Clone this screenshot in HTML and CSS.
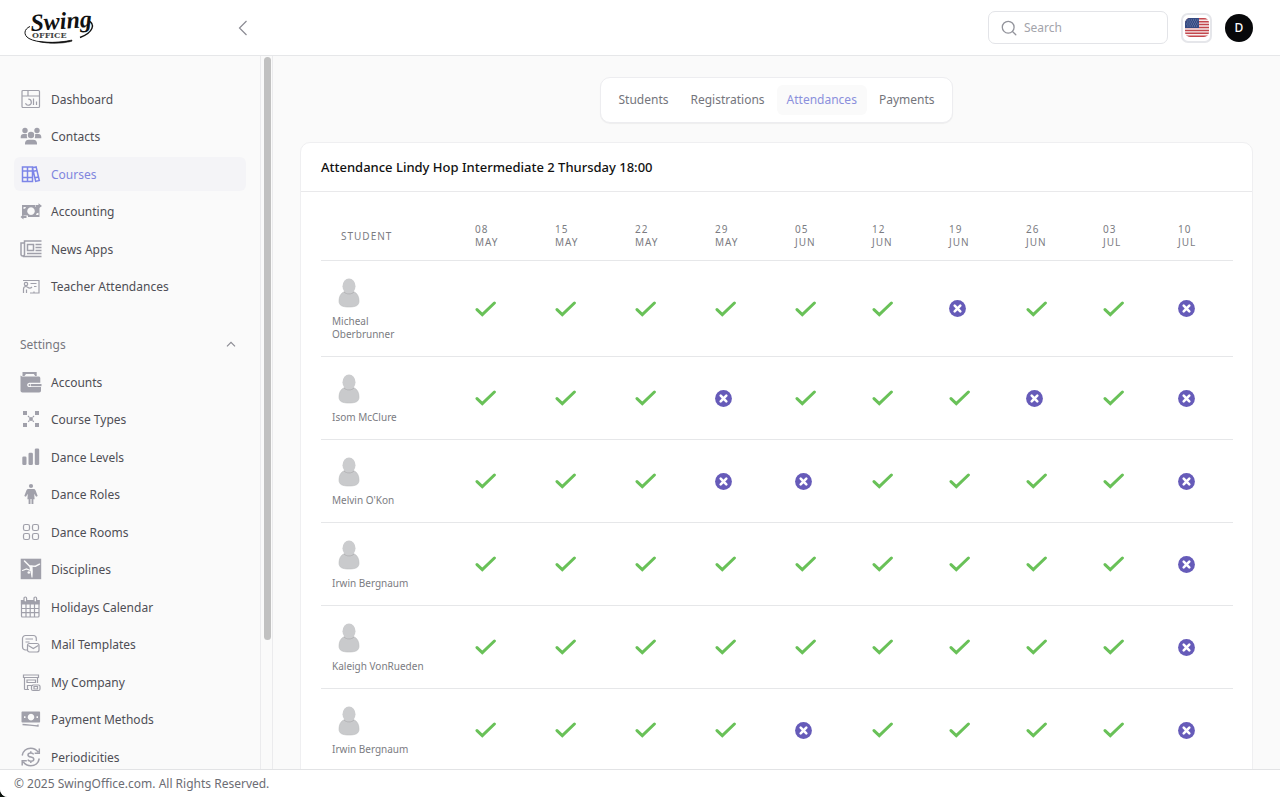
FILE: index.html
```html
<!DOCTYPE html>
<html lang="en">
<head>
    <meta charset="UTF-8">
    <meta name="viewport" content="width=device-width, initial-scale=1.0">
    <title>Attendances - SwingOffice</title>
    <link rel="stylesheet" href="styles.css">
</head>
<body>
    <!-- Shared symbols -->
    <svg class="symbols" aria-hidden="true">
        <symbol id="check" viewBox="0 0 22 16">
            <path d="M2 8.6 7.3 13.6 19.4 2" fill="none" stroke="#69c158" stroke-width="3" stroke-linecap="round"/>
        </symbol>
        <symbol id="cross" viewBox="0 0 17 17">
            <circle cx="8.5" cy="8.5" r="8.4" fill="#665bb9"/>
            <path d="M5.7 5.7 11.3 11.3M11.3 5.7 5.7 11.3" fill="none" stroke="#fff" stroke-width="2.6" stroke-linecap="round"/>
        </symbol>
        <symbol id="person" viewBox="0 0 22 30">
            <path d="M6.5 13.5C2.8 15 1 18.500 1 23c0 4.500 3.200 6 10 6s10-1.500 10-6c0-4.500-1.800-8-5.500-9.500z" fill="#c9cacc" stroke="#bcbdbf" stroke-width=".6"/>
            <ellipse cx="11" cy="8.300" rx="6.500" ry="7.700" fill="#cbccce"/>
            <path d="M6 14c2.500 2.600 7.500 2.600 10 0" fill="none" stroke="#aeafb1" stroke-width=".8"/>
        </symbol>
    </svg>

    <div class="page">
        <header class="header">
            <div class="brand">
                <a href="#" class="logo" aria-label="Swing Office">
                    <svg width="72" height="38" viewBox="0 0 72 38">
                        <path d="M7 17.500C1 20 0 26 6 29.500c8 4.500 26 5 41 2.500" fill="none" stroke="#111" stroke-width="1"/>
                        <path d="M16 32.500c11 1.500 22 1 33-1.500l-.3 1.300C38 34.800 26 35 16 32.500z" fill="#111" stroke="#111" stroke-width=".6"/>
                        <path d="M65 11.500c8 3.500 5 12-8 17" fill="none" stroke="#111" stroke-width="1.400"/>
                        <text class="logo-script" x="8" y="22" transform="rotate(-4 8 22)">Swing</text>
                        <text class="logo-office" x="9" y="29">OFFICE</text>
                    </svg>
                </a>
                <button type="button" class="collapse" aria-label="Collapse menu">
                    <svg width="10" height="16" viewBox="0 0 10 16"><path d="M8.500 1 1.500 8l7 7" fill="none" stroke="#8b8b93" stroke-width="1.200"/></svg>
                </button>
            </div>
            <div class="tools">
                <label class="search">
                    <svg width="16" height="16" viewBox="0 0 16 16" fill="none" stroke="#92939b" stroke-width="1.300" stroke-linecap="round"><circle cx="7.200" cy="7.200" r="5.900"/><path d="m11.500 11.500 3.300 3.300"/></svg>
                    <input type="search" placeholder="Search" aria-label="Search">
                </label>
                <button type="button" class="language" aria-label="Language: English">
                    <svg width="24" height="19" viewBox="0 0 24 19">
                        <clipPath id="flag"><rect width="24" height="19" rx="5"/></clipPath>
                        <g clip-path="url(#flag)">
                            <path fill="#f6eeee" d="M0 0h24v19H0z"/>
                            <path d="M0 .75h24M0 3.670h24M0 6.590h24M0 9.510h24M0 12.430h24M0 15.350h24M0 18.270h24" stroke="#c4474d" stroke-width="1.460"/>
                            <path fill="#344a82" d="M0 0h14v10H0z"/>
                            <path d="M1.500 2h12M2.500 4h11M1.500 6h12M2.500 8h11" stroke="#a9b3cf" stroke-width=".8" stroke-dasharray=".8 1.400"/>
                        </g>
                    </svg>
                </button>
                <button type="button" class="profile">D</button>
            </div>
        </header>

        <div class="middle">
            <nav class="sidebar">
                <ul class="nav-list">
                    <li><a href="#" class="nav-link">
                        <svg class="icon line" viewBox="0 0 22 22"><rect x="2" y="2.500" width="17.500" height="17" rx="1"/><path d="M2 8h17.500M8 2.500V8M8.300 11.200a3 3 0 1 1-2.800 4M13.500 10.500V17M16.500 13.500V17"/></svg>
                        Dashboard</a></li>
                    <li><a href="#" class="nav-link">
                        <svg class="icon" viewBox="0 0 22 22"><circle cx="5" cy="5.500" r="2.700"/><circle cx="17" cy="5.500" r="2.700"/><circle cx="11" cy="10" r="3.200"/><path d="M.7 13.300V12c0-1.700 1.100-2.900 2.800-2.900h2.400c.7 0 1 .1 1 .5-.2 1.300 0 2.500.4 3.700zM21.300 13.300V12c0-1.700-1.100-2.900-2.800-2.900h-2.400c-.7 0-1 .1-1 .5.200 1.300 0 2.500-.4 3.700zM5 19.500v-1.200c0-2 1.400-3.600 3.600-3.600h4.800c2.200 0 3.600 1.600 3.600 3.600v1.200z"/></svg>
                        Contacts</a></li>
                    <li><a href="#" class="nav-link active" aria-current="page">
                        <svg class="icon line thick" viewBox="0 0 22 22"><path d="M2.500 4h5v14.500h-5zM7.500 4h5v14.500h-5zM2.500 8h10M2.500 14.500h10M12.500 4.800l3.600-.9 3.200 13.600-3.600.9zM13.500 8.200l3.600-.8M15 14.800l3.600-.9"/></svg>
                        Courses</a></li>
                    <li><a href="#" class="nav-link">
                        <svg class="icon" viewBox="0 0 22 22"><path fill-rule="evenodd" d="M2 5h13v2h4.500v10H8v-1.500H2zM11 7.300a3.800 3.800 0 1 0 .01 0zM3.500 7v2A2.500 2.500 0 0 0 6 7zM18.500 15v-2.300a2.500 2.500 0 0 0-2.500 2.300z"/><path d="M15.500 5h3V3.200L22 6l-3.500 2.600V7h-3zM6.500 16h-3v-1.800L.5 17l3 2.600V18h3z"/></svg>
                        Accounting</a></li>
                    <li><a href="#" class="nav-link">
                        <svg class="icon line thick" viewBox="0 0 22 22"><path d="M21.500 3H4.500v13.500c0 2-3.500 2-3.500 0V5h3.500M2.800 18.500h18.700M7.500 6.500h6v6h-6zM15.500 6.500h6M15.500 9.500h6M15.500 12.500h6M7 15.500h14.500"/></svg>
                        News Apps</a></li>
                    <li><a href="#" class="nav-link">
                        <svg class="icon line" viewBox="0 0 22 22"><path d="M3 5.500h16v12.500h-9M3.500 18v-4c0-1.500.8-2.500 2.500-2.500s3 3.500 6 .5M6.500 18v-3.500M10.500 8.500h6M14 11.500h2.500M14 18v-1.500"/><circle cx="6" cy="9" r="1.700"/></svg>
                        Teacher Attendances</a></li>
                </ul>

                <button type="button" class="nav-heading" aria-expanded="true">
                    Settings
                    <svg width="10" height="6" viewBox="0 0 10 6"><path d="m1 5.300 4-4 4 4" fill="none" stroke="#8b8b93" stroke-width="1.200"/></svg>
                </button>

                <ul class="nav-list">
                    <li><a href="#" class="nav-link">
                        <svg class="icon" viewBox="0 0 22 22"><path d="M2.500 4V1h14.200v4h-1.500L13.800 3H6L4.500 5H2.500z"/><path fill-rule="evenodd" d="M.5 4.500 2 5.500h16.500c1 0 1.800.6 1.800 1.700v4.600H10a2.200 2.200 0 1 0 0 4.200h11v3.500c0 1.200-.6 2-1.800 2H2.500c-1.200 0-2-.8-2-2z"/><path d="M11 13h10.500v2.200H11z"/><circle cx="9.500" cy="14" r="1"/></svg>
                        Accounts</a></li>
                    <li><a href="#" class="nav-link">
                        <svg class="icon" viewBox="0 0 22 22"><path d="M3 3h4v4H3zM15 3h4v4h-4zM3 15h4v4H3zM15 15h4v4h-4zM9.300 9.300h3.400v3.400H9.300z"/><path d="m8 8 6 6M14 8l-6 6" stroke="currentColor" stroke-width="1.200" stroke-dasharray="1.600 .6"/></svg>
                        Course Types</a></li>
                    <li><a href="#" class="nav-link">
                        <svg class="icon" viewBox="0 0 22 22"><rect x="2.300" y="10.500" width="4.200" height="8.500" rx="1.300"/><rect x="8.500" y="6.800" width="4.400" height="12.200" rx="1.300"/><rect x="14.800" y="2.500" width="4.400" height="16.500" rx="1.300"/></svg>
                        Dance Levels</a></li>
                    <li><a href="#" class="nav-link">
                        <svg class="icon" viewBox="0 0 22 22"><circle cx="11" cy="3" r="2.100"/><path d="M8.500 6h5c1.200 0 1.800.6 2.200 1.700l2 5.300-1.600.8-1.900-3 .4 5.500h-1.200V21h-1.900v-5h-1v5H8.600v-4.700H7.400l.4-5.500-1.900 3-1.600-.8 2-5.300C6.700 6.600 7.300 6 8.500 6z"/></svg>
                        Dance Roles</a></li>
                    <li><a href="#" class="nav-link">
                        <svg class="icon line" viewBox="0 0 22 22"><rect x="3.500" y="3.500" width="6" height="6" rx="1.800"/><rect x="12.500" y="3.500" width="6" height="6" rx="1.800"/><rect x="3.500" y="12.500" width="6" height="6" rx="1.800"/><rect x="12.500" y="12.500" width="6" height="6" rx="1.800"/></svg>
                        Dance Rooms</a></li>
                    <li><a href="#" class="nav-link">
                        <svg class="icon" viewBox="0 0 22 22"><path d="M.7.7h20.500v20.500H.7z"/><path d="m4.500 3 5 5M9.500 8l6 .2 4-2" fill="none" stroke="#fafafa" stroke-width="1.500" stroke-linecap="round"/><path d="M9 7.500h3.500l.3 6-.3 6h-1l-1-6z" fill="#fafafa"/><path d="M10.500 12.500 6.500 11l-4 1.500" fill="none" stroke="#fafafa" stroke-width="1.200" stroke-linecap="round"/><circle cx="8.800" cy="14.500" r="1.300" fill="#fafafa"/></svg>
                        Disciplines</a></li>
                    <li><a href="#" class="nav-link">
                        <svg class="icon line" viewBox="0 0 22 22"><path d="M1.500 4.500H19V20a1 1 0 0 1-1 1H2.500a1 1 0 0 1-1-1zM1.500 12.500H19M1.500 16.700H19M6 8v13M10.200 8v13M14.500 8v13"/><path d="M1.500 4.500H19V8H1.500z" fill="currentColor"/><rect x="4" y="1" width="2.600" height="5" rx="1.300" fill="#fafafa"/><rect x="14" y="1" width="2.600" height="5" rx="1.300" fill="#fafafa"/></svg>
                        Holidays Calendar</a></li>
                    <li><a href="#" class="nav-link">
                        <svg class="icon line" viewBox="0 0 22 22"><path d="M7 17H5.500a3 3 0 0 1-3-3V5.500a3 3 0 0 1 3-3h7.800a3 3 0 0 1 3 3V8M5.500 6h7.500M5.500 9h4"/><rect x="7.500" y="10.500" width="11.500" height="8.500" rx="2"/><path d="m8.300 12.500 5 3 5-3"/></svg>
                        Mail Templates</a></li>
                    <li><a href="#" class="nav-link">
                        <svg class="icon line" viewBox="0 0 22 22"><path d="M3.500 4h15v2.500h-15zM4.500 6.500V18.500M17.500 6.500v5.500M7 9h8.500v2.500H7zM4.500 18.500H9M7.500 18.500v-4H13"/><rect x="11.500" y="14" width="8.500" height="5.500" rx="1.500"/><path d="M14 15.500h3.500v2.500H14z"/></svg>
                        My Company</a></li>
                    <li><a href="#" class="nav-link">
                        <svg class="icon" viewBox="0 0 22 22"><path fill-rule="evenodd" d="M2.500 3.500h16.600c.6 0 1 .4 1 1v9c0 .6-.4 1-1 1H2.500c-.6 0-1-.4-1-1v-9c0-.6.4-1 1-1zM11 5.800a3.300 3.300 0 1 0 .01 0zM4 8.200v1.800h1.500V8.200zM16.500 8.200v1.800H18V8.200z"/><path d="M2.500 16.500c5 0 10 1.500 15.500 1.500v-1.500" fill="none" stroke="currentColor" stroke-width="1.300"/></svg>
                        Payment Methods</a></li>
                    <li><a href="#" class="nav-link">
                        <svg class="icon line thick" viewBox="0 0 22 22"><path d="M2.200 9.500C3 5 6.500 2.200 10.700 2.200c3.300 0 5.800 1.500 7.500 4M19.300 12.500c-.8 4.500-4.300 7.300-8.500 7.300-3.300 0-5.800-1.500-7.500-4M19.300 2.500v4.700h-4.600M2.200 19.500v-4.700h4.600M13.700 8.300c-.6-1-1.600-1.400-2.900-1.400-1.700 0-2.800.7-2.800 2 0 3 5.800 1.200 5.800 4.300 0 1.300-1.200 2-3 2-1.500 0-2.500-.5-3-1.500M10.800 5.200v1.700M10.800 15.200v1.700"/></svg>
                        Periodicities</a></li>
                </ul>
            </nav>
            <div class="scrollbar"><div class="thumb"></div></div>

            <main class="content">
                <nav class="tabs">
                    <a href="#" class="tab">Students</a>
                    <a href="#" class="tab">Registrations</a>
                    <a href="#" class="tab active" aria-current="page">Attendances</a>
                    <a href="#" class="tab">Payments</a>
                </nav>

                <section class="card">
                    <h1 class="card-title">Attendance Lindy Hop Intermediate 2 Thursday 18:00</h1>
                    <div class="card-body">
                        <table class="attendance">
                            <colgroup>
                                <col class="col-student">
                                <col class="col-may" span="4">
                                <col class="col-jun" span="4">
                                <col class="col-jul" span="2">
                            </colgroup>
                            <thead>
                                <tr>
                                    <th scope="col" class="student-head">Student</th>
                                    <th scope="col">08<br>May</th>
                                    <th scope="col">15<br>May</th>
                                    <th scope="col">22<br>May</th>
                                    <th scope="col">29<br>May</th>
                                    <th scope="col">05<br>Jun</th>
                                    <th scope="col">12<br>Jun</th>
                                    <th scope="col">19<br>Jun</th>
                                    <th scope="col">26<br>Jun</th>
                                    <th scope="col">03<br>Jul</th>
                                    <th scope="col">10<br>Jul</th>
                                </tr>
                            </thead>
                            <tbody>
                                <tr>
                                    <td class="student"><svg class="person"><use href="#person"/></svg><span>Micheal Oberbrunner</span></td>
                                    <td><svg class="check"><use href="#check"/></svg></td>
                                    <td><svg class="check"><use href="#check"/></svg></td>
                                    <td><svg class="check"><use href="#check"/></svg></td>
                                    <td><svg class="check"><use href="#check"/></svg></td>
                                    <td><svg class="check"><use href="#check"/></svg></td>
                                    <td><svg class="check"><use href="#check"/></svg></td>
                                    <td><svg class="cross"><use href="#cross"/></svg></td>
                                    <td><svg class="check"><use href="#check"/></svg></td>
                                    <td><svg class="check"><use href="#check"/></svg></td>
                                    <td><svg class="cross"><use href="#cross"/></svg></td>
                                </tr>
                                <tr>
                                    <td class="student"><svg class="person"><use href="#person"/></svg><span>Isom McClure</span></td>
                                    <td><svg class="check"><use href="#check"/></svg></td>
                                    <td><svg class="check"><use href="#check"/></svg></td>
                                    <td><svg class="check"><use href="#check"/></svg></td>
                                    <td><svg class="cross"><use href="#cross"/></svg></td>
                                    <td><svg class="check"><use href="#check"/></svg></td>
                                    <td><svg class="check"><use href="#check"/></svg></td>
                                    <td><svg class="check"><use href="#check"/></svg></td>
                                    <td><svg class="cross"><use href="#cross"/></svg></td>
                                    <td><svg class="check"><use href="#check"/></svg></td>
                                    <td><svg class="cross"><use href="#cross"/></svg></td>
                                </tr>
                                <tr>
                                    <td class="student"><svg class="person"><use href="#person"/></svg><span>Melvin O'Kon</span></td>
                                    <td><svg class="check"><use href="#check"/></svg></td>
                                    <td><svg class="check"><use href="#check"/></svg></td>
                                    <td><svg class="check"><use href="#check"/></svg></td>
                                    <td><svg class="cross"><use href="#cross"/></svg></td>
                                    <td><svg class="cross"><use href="#cross"/></svg></td>
                                    <td><svg class="check"><use href="#check"/></svg></td>
                                    <td><svg class="check"><use href="#check"/></svg></td>
                                    <td><svg class="check"><use href="#check"/></svg></td>
                                    <td><svg class="check"><use href="#check"/></svg></td>
                                    <td><svg class="cross"><use href="#cross"/></svg></td>
                                </tr>
                                <tr>
                                    <td class="student"><svg class="person"><use href="#person"/></svg><span>Irwin Bergnaum</span></td>
                                    <td><svg class="check"><use href="#check"/></svg></td>
                                    <td><svg class="check"><use href="#check"/></svg></td>
                                    <td><svg class="check"><use href="#check"/></svg></td>
                                    <td><svg class="check"><use href="#check"/></svg></td>
                                    <td><svg class="check"><use href="#check"/></svg></td>
                                    <td><svg class="check"><use href="#check"/></svg></td>
                                    <td><svg class="check"><use href="#check"/></svg></td>
                                    <td><svg class="check"><use href="#check"/></svg></td>
                                    <td><svg class="check"><use href="#check"/></svg></td>
                                    <td><svg class="cross"><use href="#cross"/></svg></td>
                                </tr>
                                <tr>
                                    <td class="student"><svg class="person"><use href="#person"/></svg><span>Kaleigh VonRueden</span></td>
                                    <td><svg class="check"><use href="#check"/></svg></td>
                                    <td><svg class="check"><use href="#check"/></svg></td>
                                    <td><svg class="check"><use href="#check"/></svg></td>
                                    <td><svg class="check"><use href="#check"/></svg></td>
                                    <td><svg class="check"><use href="#check"/></svg></td>
                                    <td><svg class="check"><use href="#check"/></svg></td>
                                    <td><svg class="check"><use href="#check"/></svg></td>
                                    <td><svg class="check"><use href="#check"/></svg></td>
                                    <td><svg class="check"><use href="#check"/></svg></td>
                                    <td><svg class="cross"><use href="#cross"/></svg></td>
                                </tr>
                                <tr>
                                    <td class="student"><svg class="person"><use href="#person"/></svg><span>Irwin Bergnaum</span></td>
                                    <td><svg class="check"><use href="#check"/></svg></td>
                                    <td><svg class="check"><use href="#check"/></svg></td>
                                    <td><svg class="check"><use href="#check"/></svg></td>
                                    <td><svg class="check"><use href="#check"/></svg></td>
                                    <td><svg class="cross"><use href="#cross"/></svg></td>
                                    <td><svg class="check"><use href="#check"/></svg></td>
                                    <td><svg class="check"><use href="#check"/></svg></td>
                                    <td><svg class="check"><use href="#check"/></svg></td>
                                    <td><svg class="check"><use href="#check"/></svg></td>
                                    <td><svg class="cross"><use href="#cross"/></svg></td>
                                </tr>
                            </tbody>
                        </table>
                    </div>
                </section>
            </main>
        </div>

        <footer class="footer">© 2025 SwingOffice.com. All Rights Reserved.</footer>
    </div>
</body>
</html>
```
FILE: styles.css
```css
* {
    box-sizing: border-box;
}
body {
    margin: 0;
    font-family: "Noto Sans", sans-serif;
    font-size: 12px;
    color: #4e4e55;
    background-color: #0c120e;
}
a {
    color: inherit;
    text-decoration: none;
}
button {
    padding: 0;
    border: none;
    background: none;
    font-family: inherit;
    cursor: pointer;
}
svg {
    display: block;
    flex-shrink: 0;
}
.symbols {
    display: none;
}
.page {
    display: flex;
    flex-direction: column;
    height: 100vh;
    overflow: hidden;
    background-color: #fafafa;
    border-bottom-left-radius: 8px;
}

/* Header */
.header {
    display: flex;
    justify-content: space-between;
    align-items: center;
    padding-right: 27px;
    height: 56px;
    flex-shrink: 0;
    background-color: #fff;
    border-bottom: 1px solid #e6e7e9;
}
.brand {
    display: flex;
    justify-content: space-between;
    align-items: center;
    width: 248px;
    padding-left: 23px;
}
.logo svg {
    overflow: visible;
}
.logo-script {
    font-family: "Liberation Serif", serif;
    font-size: 24px;
    font-style: italic;
    font-weight: 700;
    fill: #111;
}
.logo-office {
    font-family: "DejaVu Serif", serif;
    font-size: 8px;
    font-weight: 700;
    fill: #444;
    stroke: #fff;
    stroke-width: 2px;
    paint-order: stroke;
}
.tools {
    display: flex;
    align-items: center;
    gap: 13px;
}
.search {
    display: flex;
    align-items: center;
    gap: 7px;
    width: 180px;
    height: 33px;
    padding: 0 12px;
    border: 1px solid #e3e4e8;
    border-radius: 7px;
}
.search input {
    width: 100%;
    min-width: 0;
    padding: 0;
    border: none;
    outline: none;
    background: none;
    font-family: inherit;
    font-size: 12px;
}
.search input::placeholder {
    color: #a3a4ab;
}
.language {
    display: flex;
    align-items: center;
    justify-content: center;
    width: 31px;
    height: 30px;
    border: 2px solid #e5e6ea;
    border-radius: 7px;
}
.profile {
    width: 28px;
    height: 28px;
    border-radius: 50%;
    background-color: #07080a;
    color: #fff;
    font-size: 12px;
    font-weight: 500;
}

/* Sidebar */
.middle {
    display: flex;
    flex: 1;
    min-height: 0;
}
.sidebar {
    width: 260px;
    flex-shrink: 0;
    padding: 26px 14px 0;
    overflow: hidden;
}
.nav-list {
    margin: 0;
    padding: 0;
    list-style: none;
}
.nav-list li {
    margin-bottom: 3px;
}
.nav-list li:nth-child(even) {
    margin-bottom: 4px;
}
.nav-link {
    display: flex;
    align-items: center;
    gap: 9px;
    height: 34px;
    padding: 0 6px;
    border-radius: 6px;
}
.nav-link.active {
    background-color: #f4f4f7;
    color: #8086de;
}
.nav-link.active .icon {
    color: #7c85e8;
}
.nav-heading {
    display: flex;
    justify-content: space-between;
    align-items: center;
    width: 100%;
    height: 34px;
    margin: 24px 0 4px;
    padding: 0 10px 0 6px;
    font-size: 12px;
    color: #77777e;
}
.icon {
    width: 22px;
    height: 22px;
    color: #a0a0aa;
    fill: currentColor;
}
.icon.line {
    fill: none;
    stroke: currentColor;
    stroke-width: 1.2;
}
.icon.thick {
    stroke-width: 1.5;
}
.scrollbar {
    width: 13px;
    flex-shrink: 0;
    padding: 1px 3px;
    border: solid #ebebed;
    border-width: 0 1px;
}
.thumb {
    width: 7px;
    height: 82%;
    border-radius: 4px;
    background-color: #c1c1c1;
}

/* Content */
.content {
    display: flex;
    flex-direction: column;
    align-items: center;
    flex: 1;
    min-width: 0;
    padding: 21px 27px 0;
    overflow: hidden;
}
.tabs {
    display: flex;
    gap: 2px;
    margin-bottom: 19px;
    padding: 7px;
    background-color: #fff;
    border: 1px solid #ededf0;
    border-radius: 10px;
    box-shadow: 0 1px 1px rgba(0, 0, 0, 0.05);
}
.tab {
    padding: 0 10px;
    line-height: 30px;
    border-radius: 6px;
    color: #74757c;
}
.tab.active {
    background-color: #fafafa;
    color: #8b90dc;
}
.card {
    width: 100%;
    flex-shrink: 0;
    background-color: #fff;
    border: 1px solid #efeff1;
    border-radius: 10px;
}
.card-title {
    margin: 0;
    padding: 0 20px;
    font-size: 13px;
    font-weight: 500;
    line-height: 48px;
    color: #111;
    border-bottom: 1px solid #e9e9eb;
}
.card-body {
    padding: 20px;
}
.attendance {
    width: 100%;
    table-layout: fixed;
    border-collapse: separate;
    border-spacing: 0;
    color: #7b7c82;
    font-size: 10px;
    line-height: 13px;
}
.col-student {
    width: 134px;
}
.col-may {
    width: 80px;
}
.col-jun {
    width: 77px;
}
.col-jul {
    width: 75px;
}
.attendance th,
.attendance td {
    padding: 0 0 0 20px;
    border-bottom: 1px solid #e6e7e9;
    text-align: left;
}
.attendance th {
    height: 49px;
    font-weight: 400;
    letter-spacing: 1px;
    text-transform: uppercase;
}
.attendance td.student {
    padding: 17px 24px 15px 11px;
}
.person {
    width: 22px;
    height: 30px;
    margin: 0 0 7px 6px;
}
.check {
    width: 22px;
    height: 16px;
}
.cross {
    width: 17px;
    height: 17px;
}

/* Footer */
.footer {
    flex-shrink: 0;
    padding: 0 14px;
    line-height: 27px;
    background-color: #fff;
    border-top: 1px solid #e2e3e5;
    color: #6c6d74;
}
```
